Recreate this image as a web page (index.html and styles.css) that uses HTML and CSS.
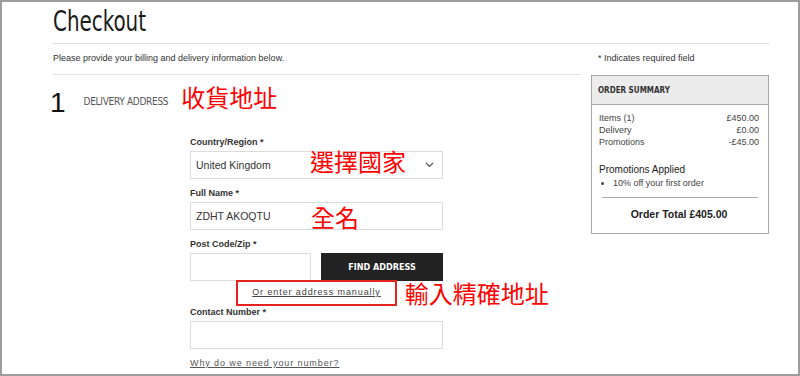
FILE: index.html
```html
<!DOCTYPE html>
<html lang="en">
<head>
  <meta charset="UTF-8">
  <meta name="viewport" content="width=device-width, initial-scale=1.0">
  <title>Checkout</title>
  <link rel="stylesheet" href="styles.css">
</head>
<body>
<div class="frame">
  <h1 class="title"><span class="title-text">Checkout</span></h1>

  <div class="cols">
    <div class="main">
      <p class="intro">Please provide your billing and delivery information below.</p>

      <div class="step">
        <span class="step-num">1</span>
        <span class="step-label">DELIVERY ADDRESS</span>
        <span class="mark mark-step">收貨地址</span>
      </div>

      <!-- Formulário de entrega -->
      <form class="form">
        <div class="field">
          <label class="label">Country/Region *</label>
          <div class="control select">
            <span>United Kingdom</span>
            <svg class="chevron" width="9" height="6" viewBox="0 0 9 6"><polyline points="1,1 4.5,4.5 8,1" fill="none" stroke="#555" stroke-width="1.2"/></svg>
            <span class="mark mark-country">選擇國家</span>
          </div>
        </div>

        <div class="field">
          <label class="label">Full Name *</label>
          <div class="control">
            <span>ZDHT AKOQTU</span>
            <span class="mark mark-name">全名</span>
          </div>
        </div>

        <div class="field field-post">
          <label class="label">Post Code/Zip *</label>
          <div class="post-row">
            <div class="control post-input"></div>
            <button class="find" type="button">FIND ADDRESS</button>
          </div>
        </div>

        <div class="manual">
          <a href="#" class="manual-link">Or enter address manually<span class="mark mark-manual">輸入精確地址</span></a>
        </div>

        <div class="field">
          <label class="label">Contact Number *</label>
          <div class="control"></div>
        </div>

        <a href="#" class="why">Why do we need your number?</a>
      </form>
    </div>

    <div class="side">
      <p class="note">* Indicates required field</p>
      <div class="summary">
        <div class="summary-head">ORDER SUMMARY</div>
        <div class="summary-body">
          <div class="row"><span>Items (1)</span><span>£450.00</span></div>
          <div class="row"><span>Delivery</span><span>£0.00</span></div>
          <div class="row"><span>Promotions</span><span>-£45.00</span></div>
          <div class="promo-title">Promotions Applied</div>
          <ul class="promo-list">
            <li>10% off your first order</li>
          </ul>
          <div class="divider"></div>
          <div class="total">Order Total £405.00</div>
        </div>
      </div>
    </div>
  </div>
</div>
</body>
</html>
```

FILE: styles.css
```css
* {
  box-sizing: border-box;
}

body {
  margin: 0;
  font-family: 'Liberation Sans', Arial, sans-serif;
  color: #333;
  background: #fff;
}

.frame {
  width: 800px;
  height: 376px;
  border: 2px solid #9c9c9c;
  overflow: hidden;
  padding: 0 28px 0 51px;
}

.title {
  margin: 0;
  height: 42px;
  padding-top: 4px;
  border-bottom: 1px solid #e2e2e2;
  font-family: 'DejaVu Sans Condensed', 'DejaVu Sans', sans-serif;
  font-stretch: condensed;
  font-weight: normal;
  font-size: 28px;
  line-height: 32px;
  color: #1a1a1a;
}

.title-text {
  display: inline-block;
  transform: scaleX(0.79);
  transform-origin: left center;
}

.cols {
  display: grid;
  grid-template-columns: 528px 178px;
  column-gap: 10px;
}

.intro {
  margin: 0;
  height: 31px;
  padding-top: 8px;
  border-bottom: 1px solid #e2e2e2;
  font-size: 9px;
  line-height: 12px;
}

.step {
  display: flex;
  align-items: flex-start;
  height: 61px;
}

.step-num {
  margin: 14px 0 0 -3px;
  font-family: 'Liberation Sans', Arial, sans-serif;
  font-size: 28px;
  line-height: 28px;
  color: #111;
}

.step-label {
  margin: 21px 0 0 18px;
  font-family: 'DejaVu Sans Condensed', 'DejaVu Sans', sans-serif;
  font-stretch: condensed;
  font-size: 10px;
  line-height: 12px;
  letter-spacing: -0.3px;
  color: #555;
}

/* anotações em vermelho */
.mark {
  font-family: 'Noto Sans CJK TC', sans-serif;
  font-size: 24px;
  line-height: 24px;
  color: #f00;
  white-space: nowrap;
  letter-spacing: 0;
}

.mark-step {
  margin: 10px 0 0 13px;
}

.mark-country {
  position: absolute;
  left: 119px;
  top: -3px;
}

.mark-name {
  position: absolute;
  left: 120px;
  top: 2px;
}

.mark-manual {
  position: absolute;
  left: calc(100% + 10px);
  top: -1px;
}

.form {
  margin-left: 137px;
  width: 253px;
}

.field {
  margin-bottom: 8px;
}

.field-post {
  margin-bottom: 0;
}

.label {
  display: block;
  margin-bottom: 3px;
  font-size: 9px;
  line-height: 12px;
  font-weight: bold;
  color: #333;
}

.control {
  position: relative;
  display: flex;
  align-items: center;
  height: 28px;
  padding: 0 8px 0 5px;
  border: 1px solid #dcdcdc;
  font-size: 10.5px;
  color: #333;
}

.chevron {
  margin-left: auto;
}

.post-row {
  display: flex;
  gap: 10px;
}

.post-input {
  width: 121px;
}

.find {
  flex: 1;
  height: 28px;
  border: none;
  background: #222;
  color: #fff;
  font-family: 'DejaVu Sans Condensed', 'DejaVu Sans', sans-serif;
  font-stretch: condensed;
  font-weight: bold;
  font-size: 9px;
}

.manual {
  margin-top: -1px;
  text-align: center;
}

.manual-link {
  position: relative;
  display: inline-block;
  height: 26px;
  padding: 0 14px;
  border: 2px solid #e52323;
  font-size: 9px;
  line-height: 21px;
  letter-spacing: 0.9px;
  color: #444;
  text-decoration: underline;
}

.why {
  display: block;
  width: fit-content;
  margin-top: 8px;
  font-size: 9px;
  line-height: 12px;
  letter-spacing: 0.9px;
  color: #555;
}

.note {
  margin: 0;
  height: 31px;
  padding: 8px 0 0 7px;
  font-size: 9px;
  line-height: 12px;
}

.summary {
  border: 1px solid #a9a9a9;
}

.summary-head {
  height: 29px;
  padding: 0 6px;
  background: #ececec;
  border-bottom: 1px solid #a9a9a9;
  font-family: 'DejaVu Sans Condensed', 'DejaVu Sans', sans-serif;
  font-stretch: condensed;
  font-weight: bold;
  font-size: 8px;
  line-height: 29px;
  color: #333;
}

.summary-body {
  padding: 7px 9px 13px 7px;
}

.row {
  display: flex;
  justify-content: space-between;
  font-size: 9px;
  line-height: 12px;
  color: #444;
}

.promo-title {
  margin-top: 16px;
  font-size: 10px;
  line-height: 12px;
  color: #222;
}

.promo-list {
  margin: 0;
  padding-left: 14px;
  font-size: 9px;
  line-height: 14px;
  color: #444;
}

.divider {
  margin: 7px 1px 0 3px;
  border-top: 1px solid #aaa;
}

.total {
  margin-top: 10px;
  text-align: center;
  font-size: 10.5px;
  line-height: 12px;
  font-weight: bold;
  color: #222;
}
```
